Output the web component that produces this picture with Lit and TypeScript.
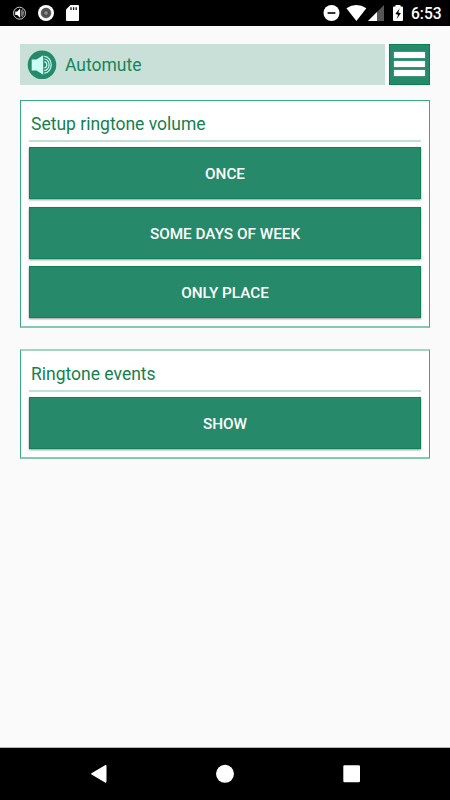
import { LitElement, html, css } from "lit";
import { customElement, property } from "lit/decorators.js";

@customElement("status-bar")
class StatusBar extends LitElement {
  static styles = css`
    :host {
      display: flex;
      flex: none;
      height: 26px;
      background: #000;
      color: #fff;
      box-sizing: border-box;
      justify-content: space-between;
    }
    svg {
      display: block;
    }
    .time {
      font: 500 15.6px/28px Roboto, sans-serif;
      width: 39px;
      flex: none;
    }
    .right {
      display: flex;
    }
  `;
  render() {
    return html`
      <svg width="90" height="26" viewBox="0 0 90 26">
        <circle cx="19.5" cy="13.2" r="6" fill="none" stroke="#ccc" stroke-width="1" />
        <path d="M15.2 11.4h2l3-3v9.6l-3-3h-2z" fill="#fff" />
        <path d="M21.3 9.5q3 3.7 0 7.4z" fill="#aaa" />
        <path d="M22.3 9.3q3 3.9 0 7.8" fill="none" stroke="#aaa" stroke-width=".8" />
        <circle cx="46" cy="13" r="8" fill="#fff" />
        <circle cx="46" cy="13" r="4.9" fill="#555" stroke="#444" stroke-width=".6" />
        <circle cx="46" cy="13" r="2.4" fill="#888" stroke="#333" stroke-width=".7" />
        <path d="M70.500 5H78q1 0 1 1v14q0 1-1 1H67q-1 0-1-1V9.500z" fill="#fff" />
        <path d="M71 7.200v2.800M73.600 7.200v2.800M76.200 7.200v2.800" stroke="#111" stroke-width="1.3" />
      </svg>
      <div class="right">
        <svg width="91" height="26" viewBox="320 0 91 26">
          <circle cx="331.5" cy="13" r="8" fill="#fff" />
          <path d="M327.600 13h7.800" stroke="#000" stroke-width="1.6" />
          <path d="M346.400 8.300q10-6.400 20 0l-10 12.600z" fill="#fff" />
          <path d="M384 5v16h-16z" fill="#555" />
          <path d="M377 12v9h-9z" fill="#fff" />
          <path d="M395.500 5h5v1.500h1.500q1 0 1 1V20q0 1-1 1h-8q-1 0-1-1V7.500q0-1 1-1h1.500z" fill="#fff" />
          <path d="M399.700 8.300l-4.300 5.700 2.700.7-1.500 4.300 4.300-5.700-2.600-.7z" fill="#000" />
        </svg>
        <div class="time">6:53</div>
      </div>
    `;
  }
}

@customElement("title-bar")
class TitleBar extends LitElement {
  static styles = css`
    :host {
      display: flex;
      height: 41px;
      gap: 4px;
    }
    .title {
      flex: 1;
      display: flex;
      align-items: center;
      gap: 8px;
      padding-left: 7px;
      background: #c8e0d7;
      color: #14855b;
      font: 400 17.5px/41px Roboto, sans-serif;
    }
    .title span {
      padding-top: 2px;
    }
    svg {
      display: block;
      flex: none;
    }
    .menu {
      width: 41px;
      height: 41px;
      box-sizing: border-box;
      border: 1px solid #078153;
      background: #268a6a;
      padding: 7px 4px 0;
      display: flex;
      flex-direction: column;
      gap: 3px;
    }
    .bar {
      height: 6px;
      background: #fff;
      box-shadow: 0 0 1px #a5d0c1;
    }
  `;
  render() {
    return html`
      <div class="title">
        <svg width="30" height="30" viewBox="0 0 30 30">
          <circle cx="15" cy="14.8" r="14.3" fill="#268a6a" />
          <path d="M4.700 9.500h4.800L16.200 5.200v19.600L9.500 20.500H4.700z" fill="#c9fff5" />
          <g fill="none" stroke="#c9fff5" stroke-width="1.2">
            <path d="M17.300 6.400a6.900 8.400 0 0 1 0 16.800" />
            <path d="M17.300 9a4.800 5.800 0 0 1 0 11.600" />
            <path d="M17.300 11.800a2.500 3 0 0 1 0 6" />
          </g>
        </svg>
        <span>Automute</span>
      </div>
      <div class="menu">
        <div class="bar"></div>
        <div class="bar"></div>
        <div class="bar"></div>
      </div>
    `;
  }
}

@customElement("action-card")
class ActionCard extends LitElement {
  @property() heading = "";
  @property({ attribute: false }) actions: string[] = [];

  static styles = css`
    :host {
      display: block;
      box-sizing: border-box;
      border: 1px solid #35ab87;
      background: #fff;
      padding: 0 8px 8px;
    }
    .heading {
      height: 39px;
      padding-left: 2px;
      font: 400 17.5px/46px Roboto, sans-serif;
      color: #14804f;
      border-bottom: 2px solid #c3e0d5;
      margin-bottom: 5px;
    }
    .list {
      display: flex;
      flex-direction: column;
      gap: 7.5px;
    }
    button {
      display: block;
      width: 100%;
      height: 52px;
      padding: 1px 0 0;
      border: 1px solid #0d8157;
      border-radius: 0;
      background: #268a6a;
      color: #fff;
      font: 500 15.3px/51px Roboto, sans-serif;
      box-shadow: 0 1px 2px rgba(0, 0, 0, 0.42);
    }
  `;
  render() {
    return html`
      <div class="heading">${this.heading}</div>
      <div class="list">${this.actions.map((a) => html`<button>${a}</button>`)}</div>
    `;
  }
}

@customElement("nav-bar")
class NavBar extends LitElement {
  static styles = css`
    :host {
      display: block;
      flex: none;
      height: 52px;
      background: #000;
      box-shadow: 0 -1px 0 #b5b5b5;
    }
    svg {
      display: block;
    }
  `;
  render() {
    return html`
      <svg width="450" height="52" viewBox="0 748 450 52" fill="#fff">
        <path d="M91.500 773.300L105 765.200q1.500-.8 1.500.8v15.600q0 1.600-1.500.8L91.500 774.500q-1-.6 0-1.200z" />
        <circle cx="225" cy="773.800" r="9" />
        <rect x="343.300" y="765.300" width="16.700" height="17" rx="1.200" />
      </svg>
    `;
  }
}

@customElement("app-root")
class AppRoot extends LitElement {
  static styles = css`
    :host {
      display: flex;
      flex-direction: column;
      width: 450px;
      height: 800px;
      overflow: hidden;
      background: #fafafa;
    }
    main {
      flex: 1;
      padding: 18px 20px 0;
    }
    .setup {
      height: 228px;
      margin-top: 15px;
      border-bottom: 2px solid #86c8b1;
    }
    .events {
      height: 110px;
      margin-top: 21px;
      border-top: 2px solid #a5d3c4;
      border-bottom: 2px solid #86c8b1;
    }
  `;
  render() {
    return html`
      <status-bar></status-bar>
      <main>
        <title-bar></title-bar>
        <action-card
          class="setup"
          heading="Setup ringtone volume"
          .actions=${["ONCE", "SOME DAYS OF WEEK", "ONLY PLACE"]}
        ></action-card>
        <action-card class="events" heading="Ringtone events" .actions=${["SHOW"]}></action-card>
      </main>
      <nav-bar></nav-bar>
    `;
  }
}
